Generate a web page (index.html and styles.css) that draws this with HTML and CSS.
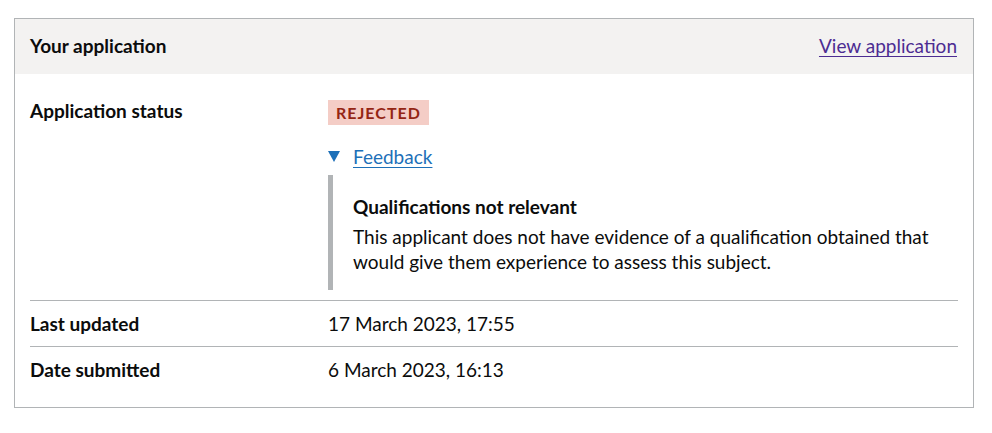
FILE: index.html
```html
<!DOCTYPE html>
<html lang="en">
<head>
<meta charset="utf-8">
<title>Your application</title>
<link rel="stylesheet" href="styles.css">
</head>
<body>
<div class="page">
  <section class="card">
    <header class="card-header">
      <h2 class="card-title">Your application</h2>
      <a class="card-action" href="#">View application</a>
    </header>
    <div class="card-content">
      <dl class="summary">
        <div class="summary-row">
          <dt class="summary-key">Application status</dt>
          <dd class="summary-value">
            <strong class="tag tag-red">Rejected</strong>
            <details class="details" open>
              <summary class="details-summary"><span class="details-summary-text">Feedback</span></summary>
              <div class="details-text">
                <h3 class="feedback-heading">Qualifications not relevant</h3>
                <p class="feedback-body">This applicant does not have evidence of a qualification obtained that would give them experience to assess this subject.</p>
              </div>
            </details>
          </dd>
        </div>
        <div class="summary-row">
          <dt class="summary-key">Last updated</dt>
          <dd class="summary-value">17 March 2023, 17:55</dd>
        </div>
        <div class="summary-row">
          <dt class="summary-key">Date submitted</dt>
          <dd class="summary-value">6 March 2023, 16:13</dd>
        </div>
      </dl>
    </div>
  </section>
</div>
</body>
</html>
```
FILE: styles.css
```css
* { box-sizing: border-box; }
html, body { margin: 0; padding: 0; background: #ffffff; }
body {
  font-family: "Lato", "Liberation Sans", Arial, sans-serif;
  font-size: 19px;
  line-height: 25px;
  color: #0b0c0c;
}
.page { padding: 18px 0 0 14px; }

.card {
  width: 960px;
  border: 1px solid #b1b4b6;
}
.card-header {
  display: flex;
  justify-content: space-between;
  align-items: center;
  background: #f3f2f1;
  padding: 14px 16px 16px 15px;
  height: 55px;
}
.card-title {
  margin: 0;
  font-size: 19px;
  font-weight: 700;
  line-height: 25px;
}
.card-action {
  color: #4c2c92;
  text-decoration: underline;
  text-decoration-thickness: 1px;
  text-underline-offset: 3px;
}

.card-content { padding: 15px 15px 15px; }
.summary { margin: 0; }
.summary-row {
  display: grid;
  grid-template-columns: 298px 1fr;
  border-bottom: 1px solid #b1b4b6;
}
.summary-row:last-child { border-bottom: none; }
.summary-key, .summary-value {
  margin: 0;
  padding: 10px 0;
}
.summary-row:first-child .summary-key { padding-top: 9px; }
.summary-key { font-weight: 700; }

.tag {
  display: inline-block;
  font-size: 16px;
  font-weight: 700;
  line-height: 16px;
  letter-spacing: 1px;
  text-transform: uppercase;
  padding: 5px 8px 4px;
  color: #942514;
  background: #f4cdc6;
  vertical-align: top;
  margin-top: 1px;
}

.details { margin-top: 19px; }
.details-summary {
  display: block;
  list-style: none;
  position: relative;
  padding-left: 25px;
  color: #1d70b8;
  cursor: pointer;
}
.details-summary::-webkit-details-marker { display: none; }
.details-summary::before {
  content: "";
  position: absolute;
  left: 0;
  top: 7px;
  width: 0;
  height: 0;
  border-style: solid;
  border-width: 11px 6.5px 0 6.5px;
  border-color: #1d70b8 transparent transparent transparent;
}
.details-summary-text {
  text-decoration: underline;
  text-decoration-thickness: 1px;
  text-underline-offset: 3px;
}
.details-text {
  margin-top: 6px;
  border-left: 5px solid #b1b4b6;
  padding: 19px 0 16px 20px;
}
.feedback-heading {
  margin: 0 0 5px;
  font-size: 19px;
  font-weight: 700;
  line-height: 25px;
}
.feedback-body { margin: 0; }
```
